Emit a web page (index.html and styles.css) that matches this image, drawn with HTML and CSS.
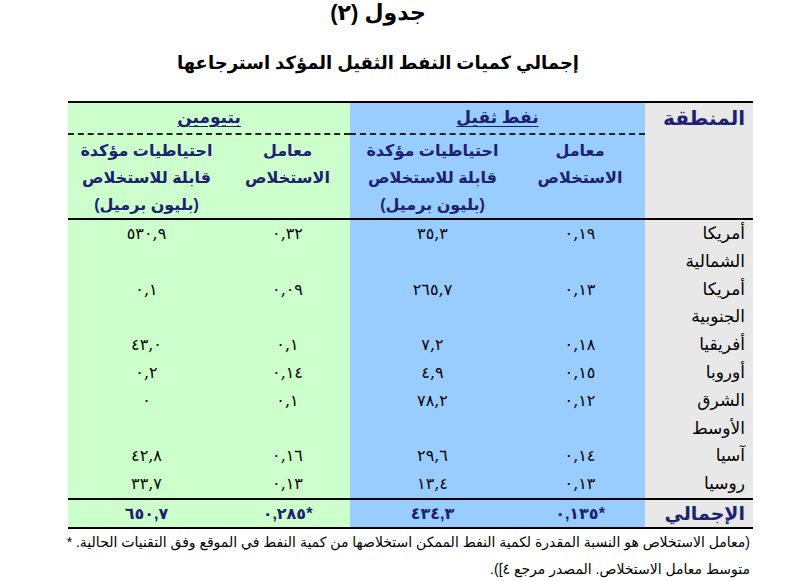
FILE: index.html
```html
<!DOCTYPE html>
<html lang="ar">
<head>
<meta charset="utf-8">
<title>جدول (٢)</title>
<link rel="stylesheet" href="styles.css">
</head>
<body>
<div class="page">
  <div class="titles">
    <h1 class="t1">جدول (٢)</h1>
    <h2 class="t2">إجمالي كميات النفط الثقيل المؤكد استرجاعها</h2>
  </div>
  <table class="tbl">
    <colgroup>
      <col class="c-region">
      <col class="c-brate">
      <col class="c-bres">
      <col class="c-grate">
      <col class="c-gres">
    </colgroup>
    <thead>
      <tr class="hrow1">
        <th class="grey region-head" rowspan="2">المنطقة</th>
        <th class="blue group" colspan="2"><span class="ul">نفط ثقيل</span></th>
        <th class="green group" colspan="2"><span class="ul">بتيومين</span></th>
      </tr>
      <tr class="hrow2">
        <th class="blue sub">معامل<br>الاستخلاص</th>
        <th class="blue sub">احتياطيات مؤكدة<br>قابلة للاستخلاص<br>(بليون برميل)</th>
        <th class="green sub">معامل<br>الاستخلاص</th>
        <th class="green sub">احتياطيات مؤكدة<br>قابلة للاستخلاص<br>(بليون برميل)</th>
      </tr>
    </thead>
    <tbody>
      <tr>
        <td class="grey name">أمريكا<br>الشمالية</td>
        <td class="blue num">٠,١٩</td>
        <td class="blue num">٣٥,٣</td>
        <td class="green num">٠,٣٢</td>
        <td class="green num">٥٣٠,٩</td>
      </tr>
      <tr>
        <td class="grey name">أمريكا<br>الجنوبية</td>
        <td class="blue num">٠,١٣</td>
        <td class="blue num">٢٦٥,٧</td>
        <td class="green num">٠,٠٩</td>
        <td class="green num">٠,١</td>
      </tr>
      <tr>
        <td class="grey name">أفريقيا</td>
        <td class="blue num">٠,١٨</td>
        <td class="blue num">٧,٢</td>
        <td class="green num">٠,١</td>
        <td class="green num">٤٣,٠</td>
      </tr>
      <tr>
        <td class="grey name">أوروبا</td>
        <td class="blue num">٠,١٥</td>
        <td class="blue num">٤,٩</td>
        <td class="green num">٠,١٤</td>
        <td class="green num">٠,٢</td>
      </tr>
      <tr>
        <td class="grey name">الشرق<br>الأوسط</td>
        <td class="blue num">٠,١٢</td>
        <td class="blue num">٧٨,٢</td>
        <td class="green num">٠,١</td>
        <td class="green num">٠</td>
      </tr>
      <tr>
        <td class="grey name">آسيا</td>
        <td class="blue num">٠,١٤</td>
        <td class="blue num">٢٩,٦</td>
        <td class="green num">٠,١٦</td>
        <td class="green num">٤٢,٨</td>
      </tr>
      <tr class="last">
        <td class="grey name">روسيا</td>
        <td class="blue num">٠,١٣</td>
        <td class="blue num">١٣,٤</td>
        <td class="green num">٠,١٣</td>
        <td class="green num">٣٣,٧</td>
      </tr>
    </tbody>
    <tfoot>
      <tr class="total">
        <td class="grey tname">الإجمالي</td>
        <td class="blue tnum">٠,١٣٥*</td>
        <td class="blue tnum">٤٣٤,٣</td>
        <td class="green tnum">٠,٢٨٥*</td>
        <td class="green tnum">٦٥٠,٧</td>
      </tr>
    </tfoot>
  </table>
  <div class="note">
    <p class="note-line">(معامل الاستخلاص هو النسبة المقدرة لكمية النفط الممكن استخلاصها من كمية النفط في الموقع وفق التقنيات الحالية. *</p>
    <p class="note-line">متوسط معامل الاستخلاص. المصدر مرجع ٤]).</p>
  </div>
</div>
</body>
</html>
```
FILE: styles.css
```css
body {
  margin: 0;
  background: #ffffff;
  color: #000000;
  font-family: "Liberation Sans", "DejaVu Sans", sans-serif;
}

.page {
  width: 802px;
  height: 581px;
  overflow: hidden;
  direction: rtl;
}

.titles {
  width: 756px;
  margin-right: 46px;
  text-align: center;
}

.t1 {
  margin: 0;
  font-size: 22px;
  line-height: 26px;
  font-weight: bold;
}

.t2 {
  margin: 24px 0 0;
  font-size: 18px;
  line-height: 26px;
  font-weight: bold;
}

.tbl {
  margin: 25px 49px 0 0;
  width: 685px;
  table-layout: fixed;
  border-collapse: separate;
  border-spacing: 0;
  direction: rtl;
}

.c-region { width: 108px; }
.c-brate { width: 130px; }
.c-bres { width: 165px; }
.c-grate { width: 125px; }
.c-gres { width: 157px; }

.grey { background: #e8e8e8; }
.blue { background: #99ccff; }
.green { background: #ccffcc; }

th {
  padding: 0;
  color: #1d2270;
  font-family: "Liberation Sans", "DejaVu Sans", sans-serif;
  font-weight: bold;
  font-size: 16px;
}

.hrow1 th {
  border-top: 2px solid #000;
  line-height: 30px;
  vertical-align: top;
}

.group {
  text-align: center;
  font-size: 17px;
  border-bottom: 2px dashed #222;
}

.ul {
  text-decoration: underline;
  text-underline-offset: 3px;
}

.region-head {
  text-align: right;
  padding-right: 8px;
  font-size: 20px;
  border-bottom: 2px solid #000;
}

.sub {
  text-align: center;
  vertical-align: top;
  padding-top: 2px;
  line-height: 27px;
  border-bottom: 2px solid #000;
}

td {
  padding: 0;
  vertical-align: top;
}

.name {
  text-align: right;
  padding-right: 8px;
  font-family: "DejaVu Serif", "DejaVu Sans", serif;
  font-size: 17px;
  line-height: 27.8px;
}

.num {
  direction: ltr;
  text-align: center;
  font-family: "DejaVu Serif", "DejaVu Sans", serif;
  font-size: 16px;
  line-height: 27.8px;
}

.last td {
  border-bottom: 2px solid #000;
}

.total td {
  border-bottom: 2px solid #000;
  line-height: 27px;
  color: #1d2270;
  font-weight: bold;
}

.tname {
  text-align: right;
  padding-right: 8px;
  font-size: 19px;
}

.tnum {
  direction: ltr;
  text-align: center;
  font-size: 16px;
}

.note {
  width: 700px;
  margin-right: 52px;
}

.note-line {
  margin: 0;
  font-size: 14px;
  line-height: 27px;
  text-align: right;
  white-space: nowrap;
}
```
